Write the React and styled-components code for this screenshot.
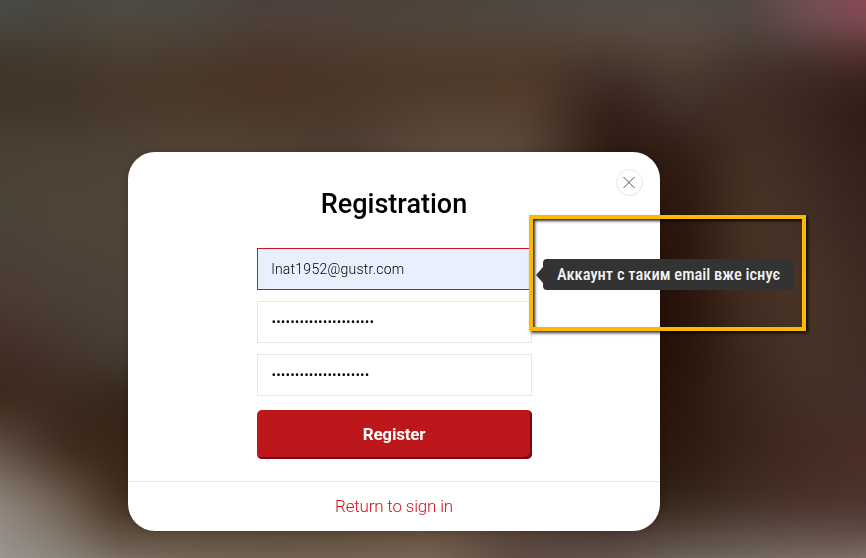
import React from 'react';
import styled, { createGlobalStyle, css } from 'styled-components';

const Global = createGlobalStyle`
  *, *::before, *::after { box-sizing: border-box; }
  body { margin: 0; font-family: Roboto, 'Liberation Sans', sans-serif; }
`;

/* Out-of-focus photo: a mesh of colours, blended along x by each band's
   gradient and along y by the band's mask. */
const STOPS = [0, 60, 120, 190, 260, 340, 430, 520, 610, 680, 750, 810, 866];
const BANDS = [
  [0, '4a4c48 484842 4d4b46 4a4844 4a423d 4c433e 4c433d 4c4944 504b46 4e4945 534848 754f55 8c4a54'],
  [25, '484641 4b443c 514a3d 4f473e 4f4038 50423a 50463b 52473c 5a4d43 5a4f47 514741 6b4f4f 804850'],
  [50, '433c31 453c30 4b4133 4b3e32 4b382c 4d3b2f 50402f 523f2f 4e3e33 54443a 493933 4c3733 5a3334'],
  [75, '403729 42372a 48392a 493829 4a3325 4a3728 4d3828 4f3a29 41302a 4c3b2f 433129 3e2a25 3c2420'],
  [110, '41362a 42362a 47392c 4b3a2c 4b3727 4c3829 514030 574132 341f17 40302a 402d24 39261f 301c16'],
  [150, '4b4133 4c4234 4e4337 524636 4f4536 4c3d33 5d4c3f 5c4a3c 2c1a12 321d14 463125 3b2921 33201a'],
  [220, '4c4338 4f4539 514535 524636 4f4536 4c3d33 5d4c3f 5c4a3c 2c1a12 29150c 4a3427 422f26 3a251f'],
  [300, '4c3a34 4a3f36 4d4238 4d4238 4d4238 4c3d33 4c3d33 4c3d33 1f0c05 27120a 432e23 4a3528 402b23'],
  [350, '432d27 44352d 483d33 483d33 483d33 483d33 3c2a1f 3c2a1f 1f0c05 28130a 3e2a20 483427 402d24'],
  [400, '3f281b 3c2a1f 35261a 35261a 35261a 35261a 35261a 35261a 220f06 2b160c 3b271e 443025 45302a'],
  [450, '64544a 402b1e 382516 382516 382516 382516 382516 382516 25130a 2d190d 3a251b 442b22 4a2f27'],
  [500, '90857b 6f6052 3f2b1b 3f2b1b 3f2b1b 3f2b1b 3f2b1b 3f2b1b 2c1b10 342419 402e25 4a3029 4c342d'],
  [530, '968f89 7e7366 594838 5b4a3b 5b4a3b 5a493b 625040 54423a 493930 4f4035 584940 5c4a43 5c4843'],
  [558, '9b9792 908a80 80766a 7a6b5d 76675a 7a6857 7d6a5a 614e45 675853 746a63 7a6e69 80726d 85756f'],
].map(([y, row]) => ({ y, colours: row.split(' ') }));

const Backdrop = styled.div`
  position: absolute;
  inset: 0;
  overflow: hidden;
`;

const Band = styled.div`
  position: absolute;
  inset: 0;
  background: linear-gradient(90deg, ${({ $colours }) =>
    $colours.map((c, i) => `#${c} ${STOPS[i]}px`).join(', ')});
  ${({ $from, $to }) => $to > 0 && css`
    mask-image: linear-gradient(180deg, transparent ${$from}px, #000 ${$to}px);
  `}
`;

const Softener = styled.div`
  position: absolute;
  inset: 0;
  backdrop-filter: blur(14px);
`;

const Page = styled.main`
  position: relative;
  height: 558px;
  padding: 152px 0 0 128px;
  overflow: hidden;
`;

const Card = styled.section`
  position: relative;
  width: 532px;
  height: 379px;
  display: flex;
  flex-direction: column;
  align-items: center;
  background: #fff;
  border-radius: 27px;
  box-shadow: 0 0 8px rgba(0, 0, 0, 0.18);
`;

const CloseButton = styled.button`
  position: absolute;
  top: 17px;
  right: 17px;
  width: 27px;
  height: 27px;
  padding: 0 1px 0 0;
  display: grid;
  place-items: center;
  border: 1px solid #e6e6e6;
  border-radius: 50%;
  background: #fff;
`;

const Title = styled.h1`
  margin: 36px 0 27px;
  font-size: 27px;
  line-height: 33px;
  font-weight: 500;
  color: #000;
`;

const Form = styled.form`
  width: 275px;
  display: flex;
  flex-direction: column;
  gap: 11px;
`;

const Field = styled.input`
  height: 42px;
  padding: 0 14px;
  border: 1px solid #e6e6e6;
  border-radius: 0;
  outline: none;
  font: 300 14px Roboto, sans-serif;
  letter-spacing: 0.13px;
  color: #000;
  background: #fff;
  ${({ $invalid }) => $invalid && css`
    letter-spacing: 0.25px;
    border-color: #d0161c;
    background: #e8effd;
  `}
`;

const Submit = styled.button`
  height: 49px;
  margin-top: 3px;
  padding: 0 0 2px;
  border: 0;
  border-radius: 5px;
  background: #bd171b;
  box-shadow: inset -2px -2px 0 #720b12;
  color: #fff;
  font: 700 17px Roboto, sans-serif;
  letter-spacing: -0.2px;
`;

const Footer = styled.footer`
  width: 100%;
  height: 50px;
  margin-top: auto;
  padding-bottom: 2px;
  display: flex;
  align-items: center;
  justify-content: center;
  border-top: 1px solid #e6e6e6;
`;

const SignInLink = styled.a`
  color: #d0161c;
  font-size: 17px;
  font-weight: 300;
  letter-spacing: -0.19px;
`;

const Highlight = styled.aside`
  position: absolute;
  left: 401px;
  top: 63px;
  width: 277px;
  height: 116px;
  border: 4px solid #fcb900;
  box-shadow: 2px 2px 3px rgba(0, 0, 0, 0.8), inset 2px 2px 3px rgba(0, 0, 0, 0.85);
`;

const Tooltip = styled.div`
  position: absolute;
  left: 10px;
  top: 40px;
  width: 251px;
  height: 31px;
  display: flex;
  align-items: center;
  justify-content: center;
  border-radius: 4px;
  background: #333;
  color: #f3f3f3;
  font: 500 16.5px 'Roboto Condensed', Roboto, sans-serif;
  font-stretch: condensed;
  white-space: nowrap;
  &::before {
    content: '';
    position: absolute;
    left: -7px;
    top: 8px;
    border: solid transparent;
    border-width: 8px 7px 8px 0;
    border-right-color: #333;
  }
`;

export default function App() {
  return (
    <Page>
      <Global />
      <Backdrop aria-hidden="true">
        {BANDS.map(({ y, colours }, i) => (
          <Band key={y} $colours={colours} $from={i ? BANDS[i - 1].y : 0} $to={y} />
        ))}
        <Softener />
      </Backdrop>
      <Card>
        <CloseButton aria-label="Close">
          <svg width="12" height="13" viewBox="0 0 12 13" fill="none" stroke="#555" strokeWidth="1">
            <path d="M0.5 1L11.5 12M11.5 1L0.5 12" />
          </svg>
        </CloseButton>
        <Title>Registration</Title>
        <Form>
          <Field $invalid type="text" defaultValue="lnat1952@gustr.com" />
          <Field type="password" defaultValue={'x'.repeat(22)} />
          <Field type="password" defaultValue={'x'.repeat(21)} />
          <Submit type="button">Register</Submit>
        </Form>
        <Footer><SignInLink>Return to sign in</SignInLink></Footer>
        <Highlight>
          <Tooltip role="tooltip">Аккаунт с таким email вже існує</Tooltip>
        </Highlight>
      </Card>
    </Page>
  );
}
